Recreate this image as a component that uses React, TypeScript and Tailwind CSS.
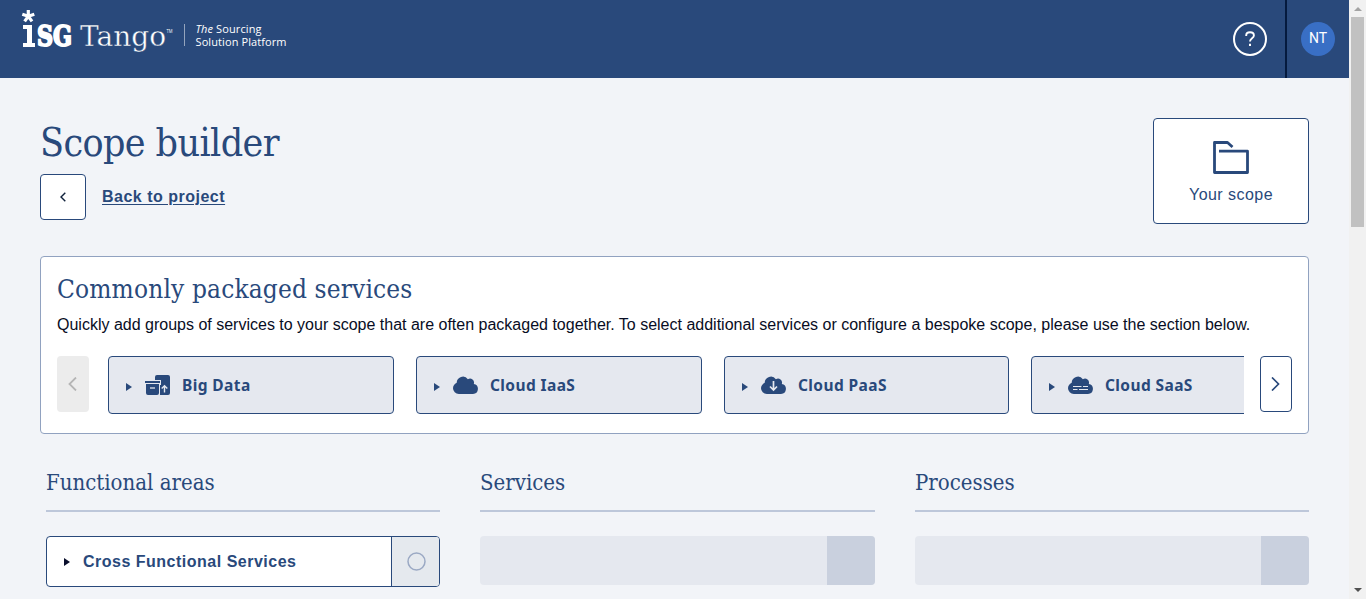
import type { ReactNode } from "react";

const slab = "font-['DejaVu_Serif_Condensed','DejaVu_Serif',serif] [font-stretch:condensed] whitespace-nowrap origin-left text-[#29497b]";

function Caret({ dark = false }: { dark?: boolean }) {
  return (
    <svg width="6" height="8" viewBox="0 0 6 8" className={dark ? "text-[#0a0f2c]" : "text-[#29497b]"}>
      <path d="M0 0L6 4L0 8Z" fill="currentColor" />
    </svg>
  );
}

function Cloud({ children }: { children?: ReactNode }) {
  return (
    <svg width="25" height="18" viewBox="0 0 25 18" fill="none">
      <path
        d="M5.800 18A5.800 5.800 0 0 1 0 12.300C0 9.800 1.500 7.700 3.700 6.800A6.200 6.200 0 0 1 14.900 3.200A4 4 0 0 1 20.800 7.900A5.100 5.100 0 0 1 20 18Z"
        fill="#29497b"
      />
      {children}
    </svg>
  );
}

function BigDataIcon() {
  return (
    <svg width="25" height="20" viewBox="0 0 25 20" fill="none">
      <path d="M10 5V2a2 2 0 0 1 2-2h11a2 2 0 0 1 2 2v16a2 2 0 0 1-2 2h-8V10h1V5Z" fill="#29497b" />
      <path d="M0 6h15v2H0ZM1 9h13v9a2 2 0 0 1-2 2H3a2 2 0 0 1-2-2Z" fill="#29497b" />
      <path d="M5 13h5" stroke="#e5e8ef" strokeWidth="1.300" />
      <path d="M19.500 17.500V11M16.700 13.500l2.800-2.800l2.800 2.800" stroke="#e5e8ef" strokeWidth="1.400" />
    </svg>
  );
}

function Package({ label, icon, className }: { label: string; icon: ReactNode; className: string }) {
  return (
    <div className={`flex h-[58px] shrink-0 items-center rounded border border-[#29497b] bg-[#e5e8ef] pl-[17px] ${className}`}>
      <div className="mt-[3px] flex"><Caret /></div>
      <div className="ml-[13px] flex w-[25px]">{icon}</div>
      <span className="ml-3 mt-px whitespace-nowrap font-['Noto_Sans',sans-serif] text-[15.500px] font-bold tracking-[0.4px] text-[#29497b]">
        {label}
      </span>
    </div>
  );
}

function Logo() {
  return (
    <svg width="310" height="78" viewBox="0 0 310 78" fill="none">
      <path d="M28.300 16.300V10M28.300 16.300L34.300 14.300M28.300 16.300L32 21.400M28.300 16.300L24.600 21.400M28.300 16.300L22.300 14.300" stroke="white" strokeWidth="3.200" />
      <g fill="white">
        <path d="M23 25h9v18h3v4H23v-4h4V29h-4Z" />
        <text x="37" y="46" textLength="35" lengthAdjust="spacingAndGlyphs" stroke="white" strokeWidth="1.900" className="font-['DejaVu_Serif',serif] text-[27px] font-bold">SG</text>
        <text x="80" y="45.500" textLength="86" lengthAdjust="spacingAndGlyphs" stroke="#29497b" strokeWidth="0.400" className="font-['DejaVu_Serif',serif] text-[28px]">Tango</text>
        <text x="166.500" y="33" textLength="6" lengthAdjust="spacingAndGlyphs" className="font-['Open_Sans',sans-serif] text-[5px]">TM</text>
        <text x="195.500" y="33" textLength="66" className="font-['Open_Sans',sans-serif] text-[11px]"><tspan fontStyle="italic">The</tspan> Sourcing</text>
        <text x="195.500" y="46" textLength="91" className="font-['Open_Sans',sans-serif] text-[11px]">Solution Platform</text>
      </g>
      <path d="M184.500 24V46" stroke="#94a4bd" />
    </svg>
  );
}

function ColumnHeading({ children }: { children: ReactNode }) {
  return (
    <div className="flex h-[48px] items-start border-b-2 border-[#bdc7da] pt-[3px]">
      <h3 className={`${slab} text-[22px] leading-8`}>{children}</h3>
    </div>
  );
}

function EmptyRow() {
  return (
    <div className="mt-6 flex h-[49px] overflow-hidden rounded bg-[#e5e8ef]">
      <div className="flex-1" />
      <div className="w-12 bg-[#c9d0de]" />
    </div>
  );
}

export default function App() {
  return (
    <div className="flex h-[599px] w-[1366px] overflow-hidden bg-[#f2f4f8] font-['Liberation_Sans',Arial,sans-serif]">
      <div className="w-[1349px] shrink-0">
        <header className="flex h-[78px] bg-[#29497b]">
          <Logo />
          <div className="ml-auto mr-[18px] mt-[22px]">
            <svg width="34" height="34" viewBox="0 0 34 34" fill="none" stroke="white">
              <circle cx="17" cy="17" r="16" strokeWidth="2" />
              <path d="M13.200 14v-.5c0-2 1.500-3.200 3.800-3.200s3.900 1.300 3.900 3.200c0 2.700-3.900 2.800-3.900 6" strokeWidth="1.900" />
              <path d="M16 21.800h2v2.200h-2Z" fill="white" stroke="none" />
            </svg>
          </div>
          <div className="flex h-full w-16 border-l-2 border-[#051a3e] pl-3.5 pt-[22px]">
            <div className="flex size-[34px] items-center justify-center rounded-full bg-[#396fc5] pb-0.5 font-['Roboto',sans-serif] text-sm text-white">NT</div>
          </div>
        </header>

        <main className="px-10 pt-10">
          <div className="flex h-[106px] justify-between">
            <div>
              <h1 className={`${slab} h-[56px] text-[39px] leading-[50px] tracking-[-0.6px]`}>Scope builder</h1>
              <div className="flex items-center gap-4">
                <button className="flex size-[46px] items-center justify-center rounded border border-[#29497b] bg-white">
                  <svg width="6" height="10" viewBox="0 0 6 10" fill="none" stroke="#0f213b" strokeWidth="1.400"><path d="M5.300.7L1 5l4.300 4.300" /></svg>
                </button>
                <a className="whitespace-nowrap text-base font-bold tracking-[0.5px] text-[#29497b] underline underline-offset-2">Back to project</a>
              </div>
            </div>
            <button className="flex h-[106px] w-[156px] flex-col items-center rounded border border-[#29497b] bg-white pt-[22px] text-[#29497b]">
              <svg width="36" height="33" viewBox="0 0 36 33" fill="none" stroke="#29497b" strokeWidth="2.800" strokeLinejoin="round">
                <path d="M6 10.200H34.500V31.500H1.500V1.500H14.500L19.500 6" />
              </svg>
              <span className="mt-[11px] text-base leading-5 tracking-[0.45px]">Your scope</span>
            </button>
          </div>

          <section className="mt-8 h-[178px] rounded border border-[#91a2c0] bg-white px-4 pt-4">
            <h2 className={`${slab} h-[40px] text-[26px] leading-8 tracking-[0.15px]`}>Commonly packaged services</h2>
            <p className="whitespace-nowrap text-base leading-6 text-[#080d24]">
              Quickly add groups of services to your scope that are often packaged together. To select additional services or configure a bespoke scope, please use the section below.
            </p>
            <div className="mt-[19px] flex">
              <button className="flex h-14 w-8 shrink-0 items-center justify-center rounded bg-[#ececec]">
                <svg width="10" height="14" viewBox="0 0 10 14" fill="none" stroke="#b5b5b5" strokeWidth="1.800"><path d="M8 .5L1.500 7L8 13.500" /></svg>
              </button>
              <div className="ml-[19px] flex w-[1136px] shrink-0 overflow-hidden">
                <Package label="Big Data" icon={<BigDataIcon />} className="mr-[22px] w-[286px]" />
                <Package label="Cloud IaaS" icon={<Cloud />} className="mr-[22px] w-[286px]" />
                <Package
                  label="Cloud PaaS"
                  icon={<Cloud><path d="M12.500 5v8.500M9 10.500l3.500 3.500l3.500-3.500" stroke="#e5e8ef" strokeWidth="1.700" /></Cloud>}
                  className="mr-[22px] w-[285px]"
                />
                <Package
                  label="Cloud SaaS"
                  icon={<Cloud><path d="M5 10.500h8.500M15 10.500h5M5 13.500h4.500M11 13.500h9" stroke="#e5e8ef" strokeWidth="1.200" /></Cloud>}
                  className="w-[286px]"
                />
              </div>
              <button className="ml-4 flex h-14 w-8 shrink-0 items-center justify-center rounded border border-[#29497b] bg-white">
                <svg width="10" height="14" viewBox="0 0 10 14" fill="none" stroke="#29497b" strokeWidth="1.700"><path d="M1 .5L7.500 7L1 13.500" /></svg>
              </button>
            </div>
          </section>

          <div className="mt-[30px] grid grid-cols-[394px_395px_394px] gap-10 pl-1.5">
            <div>
              <ColumnHeading>Functional areas</ColumnHeading>
              <div className="mt-6 flex h-[51px] overflow-hidden rounded border border-[#29497b] bg-white">
                <div className="flex flex-1 items-center pl-[17px]">
                  <div className="mt-px flex"><Caret dark /></div>
                  <span className="ml-[13px] text-base font-bold tracking-[0.5px] text-[#29497b]">Cross Functional Services</span>
                </div>
                <div className="flex w-12 items-center justify-center border-l border-[#29497b] bg-[#e5e9ee] pl-px">
                  <svg width="19" height="19" viewBox="0 0 19 19" fill="none"><circle cx="9.500" cy="9.500" r="8.500" stroke="#9ba9c4" strokeWidth="1.500" /></svg>
                </div>
              </div>
            </div>
            <div>
              <ColumnHeading>Services</ColumnHeading>
              <EmptyRow />
            </div>
            <div>
              <ColumnHeading>Processes</ColumnHeading>
              <EmptyRow />
            </div>
          </div>
        </main>
      </div>

      <div className="flex w-[17px] shrink-0 flex-col items-center justify-between bg-[#f1f1f1]">
        <div className="flex flex-col items-center pt-[7px]">
          <svg width="8" height="4" viewBox="0 0 8 4"><path d="M0 4L4 0L8 4Z" fill="#a3a3a3" /></svg>
          <div className="mt-1.5 h-[210px] w-[13px] bg-[#c1c1c1]" />
        </div>
        <svg className="mb-[7px]" width="8" height="4" viewBox="0 0 8 4"><path d="M0 0L4 4L8 0Z" fill="#505050" /></svg>
      </div>
    </div>
  );
}
